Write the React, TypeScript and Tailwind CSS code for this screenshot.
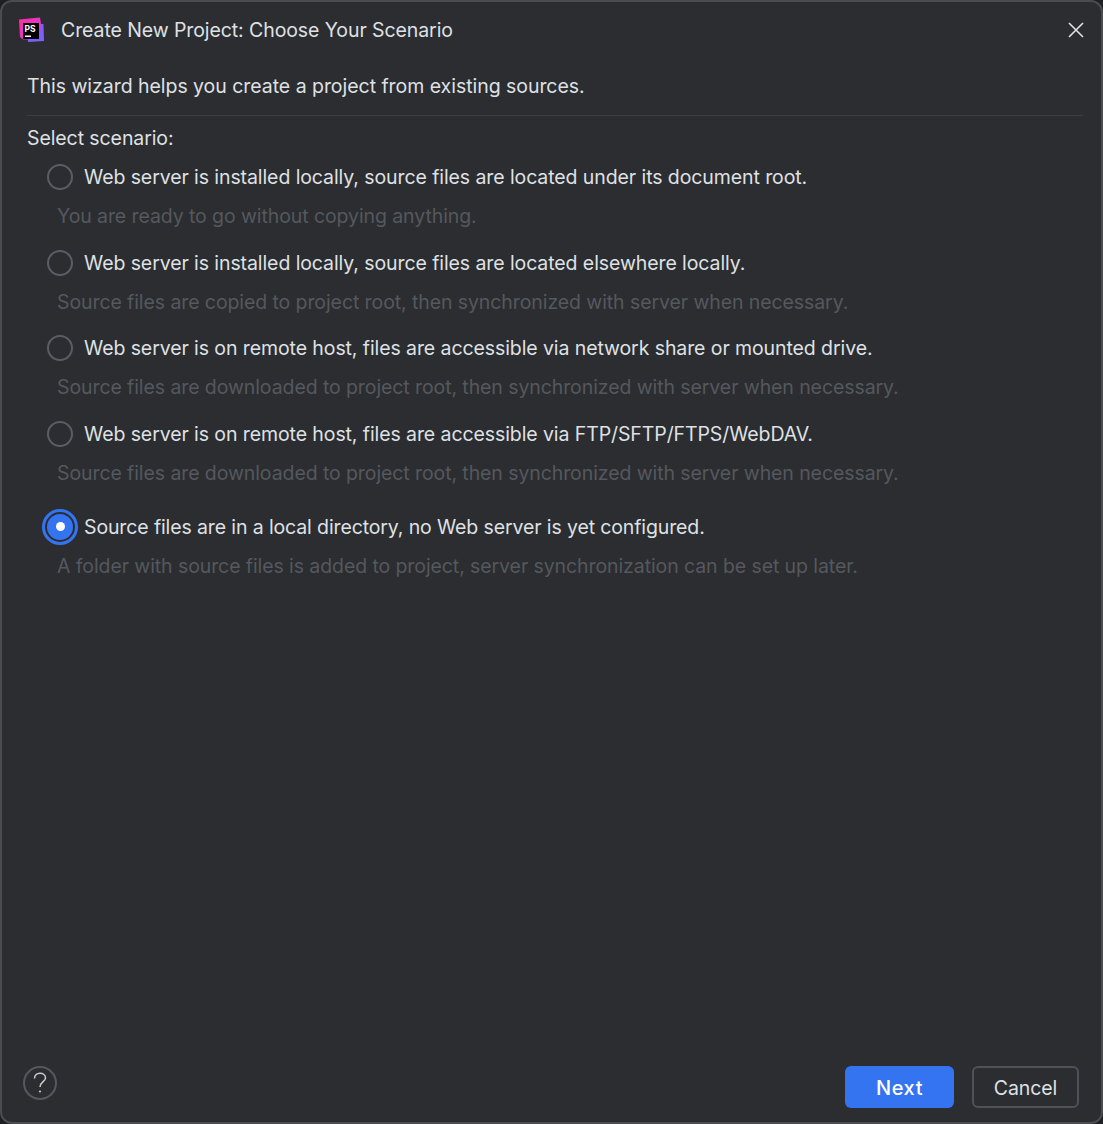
const scenarios = [
  {
    title: "Web server is installed locally, source files are located under its document root.",
    hint: "You are ready to go without copying anything.",
  },
  {
    title: "Web server is installed locally, source files are located elsewhere locally.",
    hint: "Source files are copied to project root, then synchronized with server when necessary.",
  },
  {
    title: "Web server is on remote host, files are accessible via network share or mounted drive.",
    hint: "Source files are downloaded to project root, then synchronized with server when necessary.",
  },
  {
    title: "Web server is on remote host, files are accessible via FTP/SFTP/FTPS/WebDAV.",
    hint: "Source files are downloaded to project root, then synchronized with server when necessary.",
  },
];

function PhpStormLogo() {
  return (
    <svg width="26" height="26" viewBox="0 0 26 26" className="shrink-0">
      <defs>
        <linearGradient id="psPink" x1="0" y1="0" x2="1" y2="1">
          <stop offset="0" stopColor="#ff2f9f" />
          <stop offset="0.6" stopColor="#e535c8" />
          <stop offset="1" stopColor="#8a55ff" />
        </linearGradient>
      </defs>
      <path d="M9 7 L25.5 7 L26 24 L10 25 Z" fill="#7860ff" />
      <path d="M1 2.5 L22 0.5 L23 7 L22 22 L5 22.5 L2 20 Z" fill="url(#psPink)" />
      <rect x="5" y="6" width="16" height="16" fill="#000" />
      <rect x="7" y="18.5" width="6" height="1.5" fill="#fff" />
      <text x="6.6" y="14.5" fontSize="8.5" fontWeight="700" fill="#fff" fontFamily="Inter, sans-serif">
        PS
      </text>
    </svg>
  );
}

function Scenario({ title, hint }: { title: string; hint: string }) {
  return (
    <div className="flex flex-col">
      <div className="flex h-[26px] items-center pl-[20px]">
        <span className="h-[26px] w-[26px] shrink-0 rounded-full border-2 border-[#5a5d63]" />
        <span className="ml-[11px] pt-[2px] text-[#dfe1e5]">{title}</span>
      </div>
      <div className="mt-[13px] h-[26px] pl-[30px] leading-[26px] text-[#55585e]">{hint}</div>
    </div>
  );
}

export default function App() {
  return (
    <div className="h-[1124px] w-[1103px] bg-[#1e1f22] font-['Inter',sans-serif] text-[19.5px] tracking-[-0.09px]">
      <div className="flex h-full flex-col rounded-[12px] border-2 border-[#4a4c50] bg-[#2b2d30]">
        <header className="flex h-[56px] shrink-0 items-center pl-[16px] pr-[16px]">
          <PhpStormLogo />
          <span className="ml-[17px] pt-[2px] text-[#dfe1e5]">Create New Project: Choose Your Scenario</span>
          <svg width="18" height="18" viewBox="0 0 18 18" className="ml-auto" fill="none" stroke="#dfe1e5" strokeWidth="1.6">
            <path d="M2 2l14 14M16 2L2 16" />
          </svg>
        </header>

        <main className="flex flex-1 flex-col px-[25px]">
          <p className="mt-[15px] leading-[26px] tracking-[-0.04px] text-[#dfe1e5]">
            This wizard helps you create a project from existing sources.
          </p>
          <div className="mt-[16px] mr-[-7px] h-px bg-[#3c3e42]" />
          <p className="mt-[9px] leading-[26px] text-[#dfe1e5]">Select scenario:</p>
          <div className="mt-[13px] flex flex-col gap-[20.5px]">
            {scenarios.map((s) => (
              <Scenario key={s.title} title={s.title} hint={s.hint} />
            ))}
          </div>
          <div className="mt-[28px] flex flex-col">
            <div className="flex h-[26px] items-center pl-[20px]">
              <span className="flex h-[26px] w-[26px] shrink-0 items-center justify-center rounded-full bg-[#3574f0] outline-[3px] outline-offset-[2px] outline-[#3574f0]">
                <span className="h-[9px] w-[9px] rounded-full bg-white" />
              </span>
              <span className="ml-[11px] pt-[2px] tracking-[-0.12px] text-[#dfe1e5]">
                Source files are in a local directory, no Web server is yet configured.
              </span>
            </div>
            <div className="mt-[13px] h-[26px] pl-[30px] leading-[26px] text-[#55585e]">
              A folder with source files is added to project, server synchronization can be set up later.
            </div>
          </div>
        </main>

        <footer className="flex h-[75px] shrink-0 items-start pl-[21px] pr-[22px] pt-[19px]">
          <button className="flex h-[34px] w-[34px] items-center justify-center rounded-full border-2 border-[#55585e]">
            <svg width="30" height="30" viewBox="0 0 30 30" fill="none" stroke="#c9ccd1" strokeWidth="1.5">
              <path d="M9.5 10.5 C9.5 7 12 5.2 15 5.2 C18 5.2 20.5 7 20.5 10 C20.5 13.5 15 14 15 19" />
              <circle cx="15" cy="23.5" r="1.1" fill="#c9ccd1" stroke="none" />
            </svg>
          </button>
          <button className="ml-auto h-[42px] w-[109px] rounded-[6px] bg-[#3574f0] pt-[2px] text-[20px] font-medium tracking-[0.6px] text-white">
            Next
          </button>
          <button className="ml-[18px] h-[42px] w-[107px] rounded-[6px] border-2 border-[#4e5157] pt-[3px] text-[#dfe1e5]">
            Cancel
          </button>
        </footer>
      </div>
    </div>
  );
}
